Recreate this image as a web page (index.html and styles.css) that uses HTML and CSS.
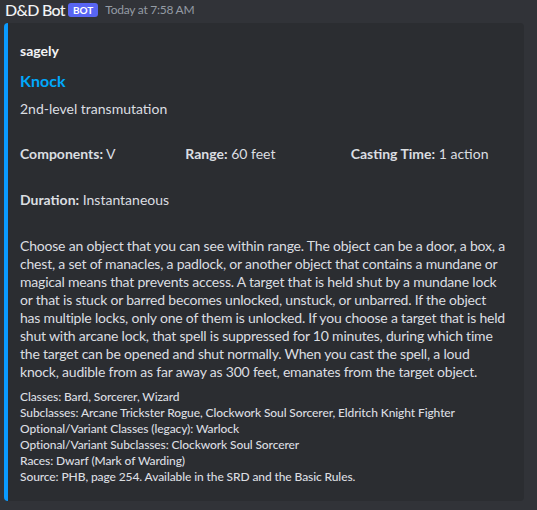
FILE: index.html
```html
<!DOCTYPE html>
<html>
<head>
<meta charset="utf-8">
<link rel="stylesheet" href="styles.css">
</head>
<body>
<div class="message">
  <div class="header">
    <span class="username">D&amp;D Bot</span>
    <span class="badge">BOT</span>
    <span class="timestamp">Today at 7:58 AM</span>
  </div>
  <div class="embed">
    <div class="author">sagely</div>
    <div class="title">Knock</div>
    <div class="description">2nd-level transmutation</div>
    <div class="fields">
      <div class="field inline"><div class="fname"></div><div class="fvalue"><b>Components:</b> V</div></div>
      <div class="field inline"><div class="fname"></div><div class="fvalue"><b>Range:</b> 60 feet</div></div>
      <div class="field inline"><div class="fname"></div><div class="fvalue"><b>Casting Time:</b> 1 action</div></div>
      <div class="field full"><div class="fname"></div><div class="fvalue"><b>Duration:</b> Instantaneous</div></div>
      <div class="field full"><div class="fname"></div><div class="fvalue body">Choose an object that you can see within range. The object can be a door, a box, a<br>chest, a set of manacles, a padlock, or another object that contains a mundane or<br>magical means that prevents access. A target that is held shut by a mundane lock<br>or that is stuck or barred becomes unlocked, unstuck, or unbarred. If the object<br>has multiple locks, only one of them is unlocked. If you choose a target that is held<br>shut with arcane lock, that spell is suppressed for 10 minutes, during which time<br>the target can be opened and shut normally. When you cast the spell, a loud<br>knock, audible from as far away as 300 feet, emanates from the target object.</div></div>
    </div>
    <div class="footer">
      Classes: Bard, Sorcerer, Wizard<br>
      Subclasses: Arcane Trickster Rogue, Clockwork Soul Sorcerer, Eldritch Knight Fighter<br>
      Optional/Variant Classes (legacy): Warlock<br>
      Optional/Variant Subclasses: Clockwork Soul Sorcerer<br>
      Races: Dwarf (Mark of Warding)<br>
      Source: PHB, page 254. Available in the SRD and the Basic Rules.
    </div>
  </div>
</div>
</body>
</html>
```
FILE: styles.css
```css
html, body {
  margin: 0;
  padding: 0;
  background: #313338;
}
body {
  font-family: Lato, "Noto Sans", sans-serif;
  color: #dbdee1;
  width: 537px;
  height: 510px;
  overflow: hidden;
}
.message {
  padding: 0 0 0 4px;
}
.header {
  display: flex;
  align-items: center;
  height: 20px;
  margin-left: 1px;
  margin-bottom: 3px;
}
.username {
  font-size: 16px;
  font-weight: 500;
  color: #f2f3f5;
  line-height: 20px;
  letter-spacing: -0.7px;
}
.badge {
  margin-left: 3px;
  background: #5865f2;
  color: #fff;
  font-size: 10px;
  font-weight: 700;
  line-height: 14px;
  height: 14px;
  padding: 0 5px;
  border-radius: 3px;
}
.timestamp {
  margin-left: 7px;
  font-size: 12px;
  color: #949ba4;
  line-height: 20px;
  letter-spacing: -0.25px;
}
.embed {
  width: 520px;
  box-sizing: border-box;
  background: #2b2d31;
  border-left: 4px solid #0a9bff;
  border-radius: 4px;
  padding: 8px 16px 16px 12px;
}
.author {
  margin-top: 9px;
  font-size: 14px;
  font-weight: 700;
  line-height: 22px;
  color: #f2f3f5;
}
.title {
  margin-top: 8px;
  font-size: 16px;
  font-weight: 700;
  line-height: 22px;
  color: #00a8fc;
}
.description {
  margin-top: 8px;
  font-size: 14px;
  line-height: 18px;
}
.fields {
  margin-top: 7px;
  display: grid;
  grid-template-columns: repeat(3, 1fr);
  gap: 8px;
}
.field.full {
  grid-column: 1 / 4;
}
.fname {
  height: 18px;
  margin-bottom: 2px;
}
.fvalue {
  font-size: 14px;
  line-height: 18px;
}
.fvalue.body {
  white-space: nowrap;
  letter-spacing: -0.2px;
}
.fvalue b {
  font-weight: 700;
  color: #dbdee1;
}
.footer {
  margin-top: 8px;
  font-size: 12px;
  font-weight: 500;
  line-height: 16px;
  color: #dbdee1;
  letter-spacing: -0.1px;
}
```
